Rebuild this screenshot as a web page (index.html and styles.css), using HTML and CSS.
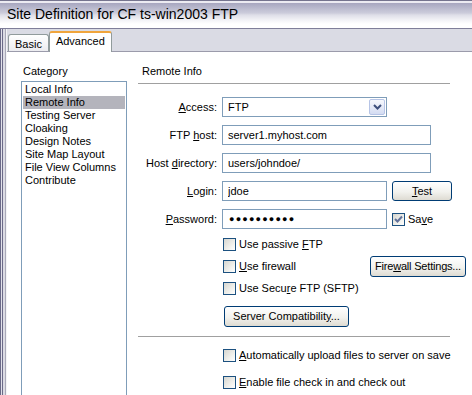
FILE: index.html
```html
<!DOCTYPE html>
<html lang="en">
<head>
    <meta charset="UTF-8">
    <title>Site Definition for CF ts-win2003 FTP</title>
    <link rel="stylesheet" href="styles.css">
</head>
<body>
    <div class="titlebar">Site Definition for CF ts-win2003 FTP</div>

    <div class="frame">
        <div class="frame-edge"></div>
        <div class="frame-body">
            <div class="tabs">
                <div class="tab">Basic</div>
                <div class="tab active">Advanced</div>
            </div>

            <div class="page">
                <div class="category">
                    <div class="category-label">Category</div>
                    <ul class="category-list">
                        <li>Local Info</li>
                        <li class="selected">Remote Info</li>
                        <li>Testing Server</li>
                        <li>Cloaking</li>
                        <li>Design Notes</li>
                        <li>Site Map Layout</li>
                        <li>File View Columns</li>
                        <li>Contribute</li>
                    </ul>
                </div>

                <div class="panel">
                    <div class="panel-title">Remote Info</div>

                    <div class="form">
                        <label class="form-label"><u>A</u>ccess:</label>
                        <div class="form-field">
                            <div class="select">
                                <span class="select-value">FTP</span>
                                <span class="select-btn">
                                    <svg width="9" height="6" viewBox="0 0 9 6"><polyline points="1,1 4.5,4.5 8,1" fill="none" stroke="#3d4f7c" stroke-width="2"/></svg>
                                </span>
                            </div>
                        </div>

                        <label class="form-label">FTP <u>h</u>ost:</label>
                        <div class="form-field">
                            <input class="textbox wide" type="text" value="server1.myhost.com" readonly>
                        </div>

                        <label class="form-label">Host <u>d</u>irectory:</label>
                        <div class="form-field">
                            <input class="textbox wide" type="text" value="users/johndoe/" readonly>
                        </div>

                        <label class="form-label"><u>L</u>ogin:</label>
                        <div class="form-field">
                            <input class="textbox" type="text" value="jdoe" readonly>
                            <button class="button test-btn"><u>T</u>est</button>
                        </div>

                        <label class="form-label"><u>P</u>assword:</label>
                        <div class="form-field">
                            <input class="textbox password" type="text" value="●●●●●●●●●●" readonly>
                            <span class="check-label save">
                                <span class="checkbox checked">
                                    <svg width="9" height="9" viewBox="0 0 9 9"><polyline points="1,4 3.5,6.5 8,1.5" fill="none" stroke="#62729a" stroke-width="2"/></svg>
                                </span>
                                <span>Sa<u>v</u>e</span>
                            </span>
                        </div>
                    </div>

                    <div class="options">
                        <div class="option">
                            <span class="checkbox"></span><span>Use passive <u>F</u>TP</span>
                        </div>
                        <div class="option">
                            <span class="option-text"><span class="checkbox"></span><span><u>U</u>se firewall</span></span>
                            <button class="button firewall-btn">Fire<u>w</u>all Settings...</button>
                        </div>
                        <div class="option">
                            <span class="checkbox"></span><span>Use Secu<u>r</u>e FTP (SFTP)</span>
                        </div>
                    </div>

                    <button class="button compat-btn">Server Compatibilit<u>y</u>...</button>

                    <div class="separator"></div>

                    <div class="options bottom">
                        <div class="option">
                            <span class="checkbox"></span><span><u>A</u>utomatically upload files to server on save</span>
                        </div>
                        <div class="option">
                            <span class="checkbox"></span><span><u>E</u>nable file check in and check out</span>
                        </div>
                    </div>
                </div>
            </div>
        </div>
    </div>
</body>
</html>
```

FILE: styles.css
```css
* {
    box-sizing: border-box;
}

body {
    margin: 0;
    width: 472px;
    height: 395px;
    overflow: hidden;
    background: #fff;
    color: #000;
    font-family: "Liberation Sans", Arial, sans-serif;
    font-size: 11px;
    line-height: 13px;
}

u {
    text-decoration: underline;
    text-underline-offset: 1px;
}

/* window title */
.titlebar {
    height: 29px;
    padding: 6px 0 0 7px;
    font-size: 14px;
    line-height: 17px;
    color: #000;
    border-bottom: 1px solid #7f7e99;
    background: linear-gradient(to bottom,
        #75748e 0, #75748e 1px,
        #ecebf2 1px, #ecebf2 3px,
        #a7a6bf 3px, #bdbdd0 9px,
        #cbcbdb 13px, #dedee8 15px,
        #f2f2f6 20px, #fff 24px, #fff 100%);
}

.frame {
    display: flex;
}

.frame-edge {
    width: 7px;
    flex: none;
    background: linear-gradient(to right,
        #6b6a88 0, #6b6a88 1px,
        #e2e2ea 1px, #e2e2ea 2px,
        #6b6a88 2px, #6b6a88 3px,
        #dcdce4 3px, #dcdce4 5px,
        #a9a9b8 5px, #a9a9b8 6px,
        #f4f4f6 6px);
}

.frame-body {
    flex: 1;
}

/* tabs */
.tabs {
    height: 23px;
    display: flex;
    align-items: flex-end;
    padding-left: 1px;
    background: #dadbe4;
    border-bottom: 1px solid #9b9bab;
}

.tab {
    height: 17px;
    padding: 3px 6px 0 6px;
    border: 1px solid #919b9c;
    border-bottom: none;
    border-radius: 3px 3px 0 0;
    background: linear-gradient(to bottom, #fff, #ececf0);
}

.tab.active {
    height: 21px;
    margin-bottom: -1px;
    padding: 2px 6px 0 6px;
    border-top: 2px solid #f0a53c;
    background: #fff;
}

/* page */
.page {
    display: flex;
    padding-top: 13px;
}

.category {
    width: 106px;
    margin-left: 14px;
}

.category-label {
    padding-left: 2px;
}

.category-list {
    list-style: none;
    margin: 3px 0 0 0;
    padding: 1px;
    height: 330px;
    border: 1px solid #7f9db9;
}

.category-list li {
    padding-left: 2px;
}

.category-list li.selected {
    background: #b4b4bc;
}

.panel {
    width: 312px;
    margin-left: 11px;
}

.panel-title {
    padding: 0 0 5px 4px;
    border-bottom: 1px solid #a0a0a0;
}

/* form rows */
.form {
    display: grid;
    grid-template-columns: 79px 1fr;
    column-gap: 5px;
    row-gap: 8px;
    margin-top: 13px;
}

.form-label {
    line-height: 20px;
    text-align: right;
    white-space: nowrap;
}

.form-field {
    display: flex;
    align-items: center;
    height: 20px;
}

.textbox {
    width: 165px;
    height: 20px;
    margin: 0;
    padding: 0 5px;
    border: 1px solid #7f9db9;
    background: #fff;
    color: #000;
    font-family: inherit;
    font-size: 11px;
    outline: none;
}

.textbox.wide {
    width: 209px;
}

.textbox.password {
    padding-left: 6px;
    font-size: 9px;
    letter-spacing: 1.2px;
}

.select {
    display: flex;
    align-items: center;
    width: 165px;
    height: 20px;
    border: 1px solid #7f9db9;
    background: #fff;
}

.select-value {
    padding-left: 5px;
    flex: 1;
}

.select-btn {
    display: flex;
    align-items: center;
    justify-content: center;
    width: 16px;
    height: 16px;
    margin-right: 1px;
    border: 1px solid #b6c4e6;
    border-radius: 2px;
    background: linear-gradient(to bottom, #f6f8fd, #d4dcf2);
}

.button {
    margin: 0;
    padding: 0;
    height: 20px;
    border: 1px solid #003c74;
    border-radius: 3px;
    background: linear-gradient(to bottom, #ffffff, #f2f2ee 55%, #dedbd2);
    color: #000;
    font-family: inherit;
    font-size: 11px;
    line-height: 13px;
    white-space: nowrap;
}

.test-btn {
    width: 60px;
    margin-left: 5px;
    flex: none;
}

.check-label {
    display: flex;
    align-items: center;
}

.save {
    margin-left: 5px;
}

.checkbox {
    display: inline-flex;
    align-items: center;
    justify-content: center;
    flex: none;
    width: 13px;
    height: 13px;
    margin-right: 3px;
    border: 1px solid #1c5180;
    background: linear-gradient(135deg, #d6d6d0, #f2f2ee 65%, #fff);
}

/* checkbox options */
.options {
    margin-top: 4px;
    padding-left: 85px;
}

.option {
    display: flex;
    align-items: center;
    height: 22px;
    white-space: nowrap;
}

.option-text {
    display: flex;
    align-items: center;
    flex: none;
    width: 147px;
}

.firewall-btn {
    flex: none;
    width: 96px;
    height: 21px;
    letter-spacing: -0.2px;
}

.compat-btn {
    display: block;
    width: 125px;
    height: 21px;
    margin: 7px 0 0 86px;
}

.separator {
    margin-top: 9px;
    border-top: 1px solid #a0a0a0;
}

.options.bottom {
    margin-top: 5px;
}

.options.bottom .option {
    height: 27px;
}
```
